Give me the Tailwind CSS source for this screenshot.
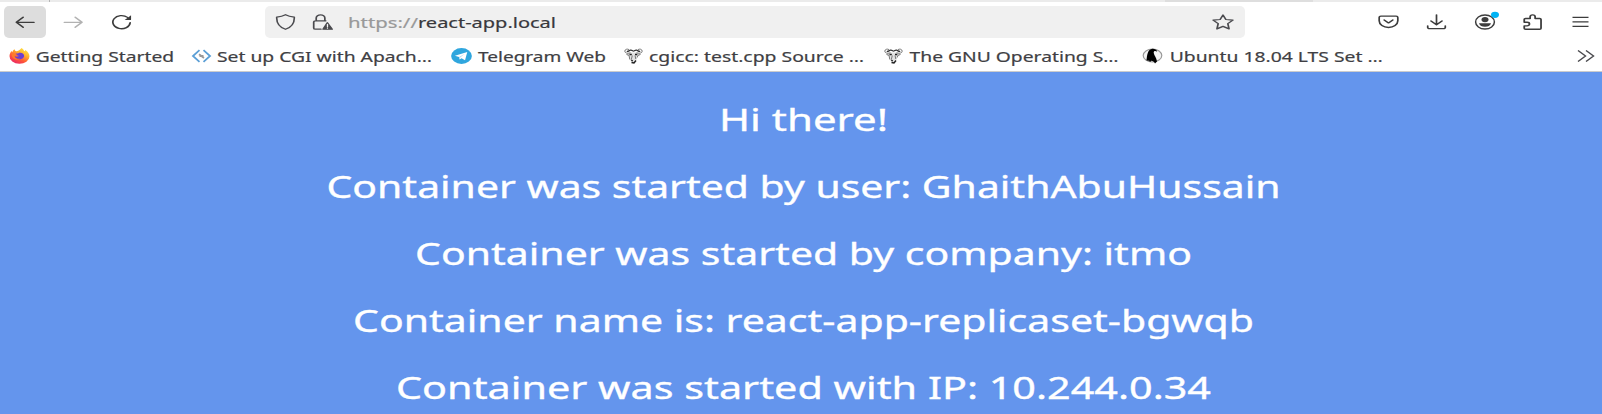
<!DOCTYPE html>
<html lang="en">
<head>
<meta charset="utf-8">
<title>react-app.local</title>
<script src="https://cdn.jsdelivr.net/npm/@tailwindcss/browser@4"></script>
</head>
<body class="w-[1602px] h-[414px] overflow-hidden flex flex-col bg-white font-['Noto_Sans','Open_Sans',sans-serif] text-[#3f3f44]">
<!-- tab strip edge -->
<div class="h-[2px] shrink-0 bg-[#ebebeb] flex">
  <div class="w-px ml-[49px] bg-[#b5b5b5]"></div>
  <div class="ml-[1115px] w-[148px] bg-[#dedede]"></div>
</div>
<!-- navigation toolbar -->
<div class="h-[40px] shrink-0 flex items-center pl-1">
  <button class="w-[42px] h-8 rounded-[5px] bg-[#dddddd] flex items-center justify-center">
    <svg class="w-[21px] h-4" viewBox="0 0 16 16" preserveAspectRatio="none" fill="none" stroke="#3c3c3c" stroke-width="1.3" stroke-linecap="round" stroke-linejoin="round"><path d="M14.500 8.300H1M6.200 3.300L1 8.300l5.200 5"/></svg>
  </button>
  <button class="w-[42px] h-8 ml-[6px] flex items-center justify-center">
    <svg class="w-[21px] h-4" viewBox="0 0 16 16" preserveAspectRatio="none" fill="none" stroke="#b2b2b2" stroke-width="1.3" stroke-linecap="round" stroke-linejoin="round"><path d="M1 8.300h13.5M9.300 3.300l5.200 5l-5.200 5"/></svg>
  </button>
  <button class="w-[42px] h-8 ml-[6px] flex items-center justify-center">
    <svg class="w-[21px] h-4" viewBox="0 0 16 16" preserveAspectRatio="none" fill="none" stroke="#3c3c3c" stroke-width="1.3" stroke-linecap="round"><path d="M14.6 8.6A6.6 6.6 0 1 1 12.6 3.4"/><path d="M15.3 1.2v4.4a.5.5 0 0 1-.5.5h-4.4z" fill="#3c3c3c" stroke="none"/></svg>
  </button>
  <div class="w-[980px] h-8 ml-[123px] rounded-[5px] bg-[#f0f0f0] flex items-center pl-[10px] pr-[11px]">
    <svg class="w-[21px] h-4" viewBox="0 0 16 16" preserveAspectRatio="none" fill="none" stroke="#4a4a4e" stroke-width="1.25" stroke-linejoin="round"><path d="M8 .7C6.2 2 3.7 2.8 1.3 3.1c-.2 5.300 1.900 9.900 6.700 12.200c4.800-2.300 6.900-6.900 6.700-12.200C12.300 2.800 9.800 2 8 .7z"/></svg>
    <svg class="w-[21px] h-4 ml-[16px]" viewBox="0 0 16 16" preserveAspectRatio="none" fill="none" stroke="#4a4a4e" stroke-width="1.3" stroke-linecap="round" stroke-linejoin="round"><path d="M6.800 15.200H2.600A1.300 1.300 0 0 1 1.300 13.900V8.100a1.300 1.300 0 0 1 1.300-1.300h7.900M3.200 6.800V4.100a3.200 3.200 0 0 1 6.600 0v2.700"/><path d="M11.700 8.700L8.400 15.200h7L11.700 8.700z" fill="#4a4a4e"/><path d="M11.800 10.300v2.400M11.800 13.900v.3" stroke="#f0f0f0" stroke-width="1"/></svg>
    <svg class="ml-[15px] w-[70px] h-6 overflow-visible fill-[#999999] stroke-[#999999] stroke-[0.2px] text-[15px]"><text y="18" textLength="70" lengthAdjust="spacingAndGlyphs">https://</text></svg>
    <svg class="w-[139px] h-6 overflow-visible fill-[#38383c] stroke-[#38383c] stroke-[0.2px] text-[15px]"><text y="18" textLength="138" lengthAdjust="spacingAndGlyphs">react-app.local</text></svg>
    <svg class="w-[22px] h-4 ml-auto" viewBox="0 0 16 16" preserveAspectRatio="none" fill="none" stroke="#4a4a4e" stroke-width="1.25" stroke-linejoin="round"><path d="M8 1L10.100 5.500L15.200 6.100L11.500 9.600L12.400 14.900L8 12.400L3.600 14.900L4.500 9.600L.8 6.100L5.900 5.500z"/></svg>
  </div>
  <div class="flex items-center ml-[133px] gap-[27px]">
    <svg class="w-[21px] h-4" viewBox="0 0 16 16" preserveAspectRatio="none" fill="none" stroke="#3c3c3c" stroke-width="1.3" stroke-linecap="round" stroke-linejoin="round"><path d="M2.200 2.200h11.600a1.300 1.300 0 0 1 1.300 1.300v3.300a7.100 6.700 0 0 1-14.200 0V3.500a1.300 1.300 0 0 1 1.300-1.300z"/><path d="M4.700 6L8 8.900l3.300-2.900"/></svg>
    <svg class="w-[21px] h-4" viewBox="0 0 16 16" preserveAspectRatio="none" fill="none" stroke="#3c3c3c" stroke-width="1.3" stroke-linecap="round" stroke-linejoin="round"><path d="M8 .8v9.800M3.800 6.900L8 10.800l4.200-3.900M1.300 11.800v1.600a1.300 1.300 0 0 0 1.300 1.300h10.800a1.300 1.300 0 0 0 1.300-1.300v-1.600"/></svg>
    <svg class="w-[26px] h-[19px] -mr-[5px] -mt-[3px]" viewBox="0 0 26 19" fill="none"><ellipse cx="11" cy="11" rx="9.400" ry="7.100" stroke="#3c3c3c" stroke-width="1.500"/><ellipse cx="11" cy="8.600" rx="3.500" ry="2.600" fill="#3c3c3c"/><path d="M5 12.200h12c-.5 2.400-3 3.600-6 3.600s-5.500-1.200-6-3.600z" fill="#3c3c3c"/><ellipse cx="21" cy="3.800" rx="4" ry="3.100" fill="#00b3f4"/></svg>
    <svg class="w-[21px] h-4" viewBox="0 0 16 16" preserveAspectRatio="none" fill="none" stroke="#3c3c3c" stroke-width="1.350" stroke-linejoin="round"><path d="M1.700 8.200V5.500a1 1 0 0 1 1-1h3.500V2.800a1.900 1.900 0 0 1 3.800 0v1.700h3.500a1 1 0 0 1 1 1v8.700a1 1 0 0 1-1 1H2.700a1 1 0 0 1-1-1v-2.400h2.200a1.800 1.800 0 0 0 0-3.600z"/></svg>
    <svg class="w-[21px] h-4" viewBox="0 0 21 16" fill="none" stroke="#3c3c3c" stroke-width="1.300"><path d="M2.500 3.400h16M2.500 7.900h16M2.500 12.400h16"/></svg>
  </div>
</div>
<!-- bookmarks toolbar -->
<div class="h-[30px] shrink-0 border-b border-[#cccccc] flex items-center pb-px pl-[9px] pr-[7px] text-[14.7px] fill-[#3f3f44]">
  <svg class="w-[21px] h-4" viewBox="0 0 16 16" preserveAspectRatio="none"><defs><linearGradient id="ff" x1=".85" y1="0" x2=".2" y2="1"><stop offset="0" stop-color="#fff04a"/><stop offset=".35" stop-color="#ffb32c"/><stop offset=".65" stop-color="#ff5a36"/><stop offset="1" stop-color="#e8206c"/></linearGradient></defs><path d="M9.600 0c1 1 1.800 2 2 3.300c.5-.3.700-.8.700-1.300C14.500 3.600 15.700 6 15.600 8.600a7.600 7.300 0 0 1-15.200-.3C.4 6.200 1 4.400 2 3c.1.500.3.900.6 1.200c.1-1.200.8-2.400 1.700-3c0 .8.500 1.600 1.300 2c1.300 0 2.200-.8 4-3.200z" fill="url(#ff)"/><path d="M4.800 6.100c1.300-.8 2.200-.5 3-1.300c2.200-.5 4 1.300 3.700 3.400c-.2 2-1.900 3.100-3.700 3c-2-.1-3.300-1.400-3.400-3c1 .7 2.200.5 3.200-.3c-1.200-.2-2-.9-2.800-1.800z" fill="#6b3fd0"/><path d="M2 6.200c1.400-1 3-.5 4.100.2c-.4.900-1.600 1-1.900 1.800c.4 1.900 2.300 3 4.300 2.500c-2.700 2.400-6.500.2-6.500-4.500z" fill="#ff7a2a"/></svg>
  <svg class="ml-[5px] w-[139px] h-6 overflow-visible stroke-[#3f3f44] stroke-[0.2px]"><text x=".7" y="17.500" textLength="138.500" lengthAdjust="spacingAndGlyphs">Getting Started</text></svg>
  <svg class="w-[21px] h-4 ml-[17px]" viewBox="0 0 21 16" fill="none" stroke="#5b9fd6" stroke-width="1.800"><path d="M8.500 2.200L2 8l6.500 5.800M12.500 2.200L19 8l-6.500 5.800"/><path d="M8 6.200l5 3.800M8.500 8h4" stroke="#999999" stroke-width="1.800"/></svg>
  <svg class="ml-[5px] w-[216px] h-6 overflow-visible stroke-[#3f3f44] stroke-[0.2px]"><text y="17.500" textLength="215" lengthAdjust="spacingAndGlyphs">Set up CGI with Apach…</text></svg>
  <svg class="w-[21px] h-4 ml-[18px]" viewBox="0 0 16 16" preserveAspectRatio="none"><circle cx="8" cy="8" r="7.900" fill="#2fa6de"/><path d="M3 7.800l9.400-3.700l-1.700 8.100l-2.700-2l-1.400 1.300l-.5-2.500z" fill="#fff"/><path d="M6.100 9l4.500-3.200L7 9.500l-.4 2z" fill="#b5d9ee"/></svg>
  <svg class="ml-[6px] w-[128px] h-6 overflow-visible stroke-[#3f3f44] stroke-[0.2px]"><text y="17.500" textLength="128" lengthAdjust="spacingAndGlyphs">Telegram Web</text></svg>
  <svg class="w-[19px] h-4 ml-[18px]" viewBox="0 0 19 16" fill="none" stroke="#777777" stroke-width="1"><path d="M4 4.500h11l1 2.500l-2.500 1l-1 4l-2.500 3h-2l-2-3l-1-4L2.500 7z" fill="#e2e2e2" stroke="none"/><path d="M6.500 4.800C4 5.800.8 5.200.8 3.200S3.500.6 5 1.600M12.500 4.800c2.500 1 5.700.4 5.700-1.600s-2.700-2.600-4.200-1.600"/><path d="M2.800 3.300c1.500.5 2.200-.8 3.700-1.100s2.300.9 3 .9s1.500-1.200 3-.9s2.200 1.600 3.700 1.100" stroke="#333333" stroke-width="1.300"/><path d="M2.500 6.500l2.500.8l.8 4.200M16.500 6.500l-2.500.8l-.8 2.200M8.300 7.500l-1 4M11 7.500l.8 3.500"/><path d="M5.500 6.500h2.300M11 6.500h2.300M7.300 12.200l1.500.8M7.500 14.500l2.500.5l2-2.500" stroke="#222222" stroke-width="1.400"/></svg>
  <svg class="ml-[6px] w-[216px] h-6 overflow-visible stroke-[#3f3f44] stroke-[0.2px]"><text y="17.500" textLength="215" lengthAdjust="spacingAndGlyphs">cgicc: test.cpp Source …</text></svg>
  <svg class="w-[19px] h-4 ml-[19px]" viewBox="0 0 19 16" fill="none" stroke="#777777" stroke-width="1"><path d="M4 4.500h11l1 2.500l-2.500 1l-1 4l-2.500 3h-2l-2-3l-1-4L2.500 7z" fill="#e2e2e2" stroke="none"/><path d="M6.500 4.800C4 5.800.8 5.200.8 3.200S3.500.6 5 1.600M12.500 4.800c2.500 1 5.700.4 5.700-1.600s-2.700-2.600-4.200-1.600"/><path d="M2.800 3.300c1.500.5 2.200-.8 3.700-1.100s2.300.9 3 .9s1.500-1.200 3-.9s2.200 1.600 3.700 1.100" stroke="#333333" stroke-width="1.300"/><path d="M2.500 6.500l2.500.8l.8 4.200M16.500 6.500l-2.500.8l-.8 2.200M8.300 7.500l-1 4M11 7.500l.8 3.500"/><path d="M5.500 6.500h2.300M11 6.500h2.300M7.300 12.200l1.500.8M7.500 14.500l2.500.5l2-2.500" stroke="#222222" stroke-width="1.400"/></svg>
  <svg class="ml-[6px] w-[210px] h-6 overflow-visible stroke-[#3f3f44] stroke-[0.2px]"><text x=".5" y="17.500" textLength="209" lengthAdjust="spacingAndGlyphs">The GNU Operating S…</text></svg>
  <svg class="w-[21px] h-4 ml-[23px]" viewBox="0 0 21 16"><ellipse cx="10.500" cy="7.500" rx="9.300" ry="6.500" fill="#f5f5f5" stroke="#999999" stroke-width="1.200"/><path d="M4.500 12.500C5 8 5.500 1 10.500.8c2-.1 4.200.7 4.700 3c-1.700-1.300-3.200-1-3.500.4c-.3 2 3 5.800 3.300 9.200l-2 2.200c-.3-1.800-2.500-2.600-4-2.800l-1 1.400l-.7-1.500z" fill="#000"/></svg>
  <svg class="ml-[6px] w-[214px] h-6 overflow-visible stroke-[#3f3f44] stroke-[0.2px]"><text x=".7" y="17.500" textLength="213" lengthAdjust="spacingAndGlyphs">Ubuntu 18.04 LTS Set …</text></svg>
  <svg class="w-[19px] h-3 ml-auto" viewBox="0 0 19 12" fill="none" stroke="#4a4a4e" stroke-width="1.400"><path d="M2 .5L9.500 6L2 11.500M10 .5L17.500 6L10 11.500"/></svg>
</div>
<!-- page content -->
<main class="flex-1 bg-[#6495ed] fill-white stroke-white stroke-[0.35px] text-[31px] flex flex-col items-center pt-[15px] pl-[4px]">
  <svg class="w-[169px] h-[67px] shrink-0 overflow-visible"><text y="44.300" textLength="169" lengthAdjust="spacingAndGlyphs">Hi there!</text></svg>
  <svg class="w-[955px] h-[67px] shrink-0 overflow-visible"><text x=".5" y="44.300" textLength="954" lengthAdjust="spacingAndGlyphs">Container was started by user: GhaithAbuHussain</text></svg>
  <svg class="w-[777px] h-[67px] shrink-0 overflow-visible"><text y="44.300" textLength="777" lengthAdjust="spacingAndGlyphs">Container was started by company: itmo</text></svg>
  <svg class="w-[901px] h-[67px] shrink-0 overflow-visible"><text y="44.300" textLength="901" lengthAdjust="spacingAndGlyphs">Container name is: react-app-replicaset-bgwqb</text></svg>
  <svg class="w-[815px] h-[67px] shrink-0 overflow-visible"><text y="44.300" textLength="815" lengthAdjust="spacingAndGlyphs">Container was started with IP: 10.244.0.34</text></svg>
</main>
</body>
</html>
